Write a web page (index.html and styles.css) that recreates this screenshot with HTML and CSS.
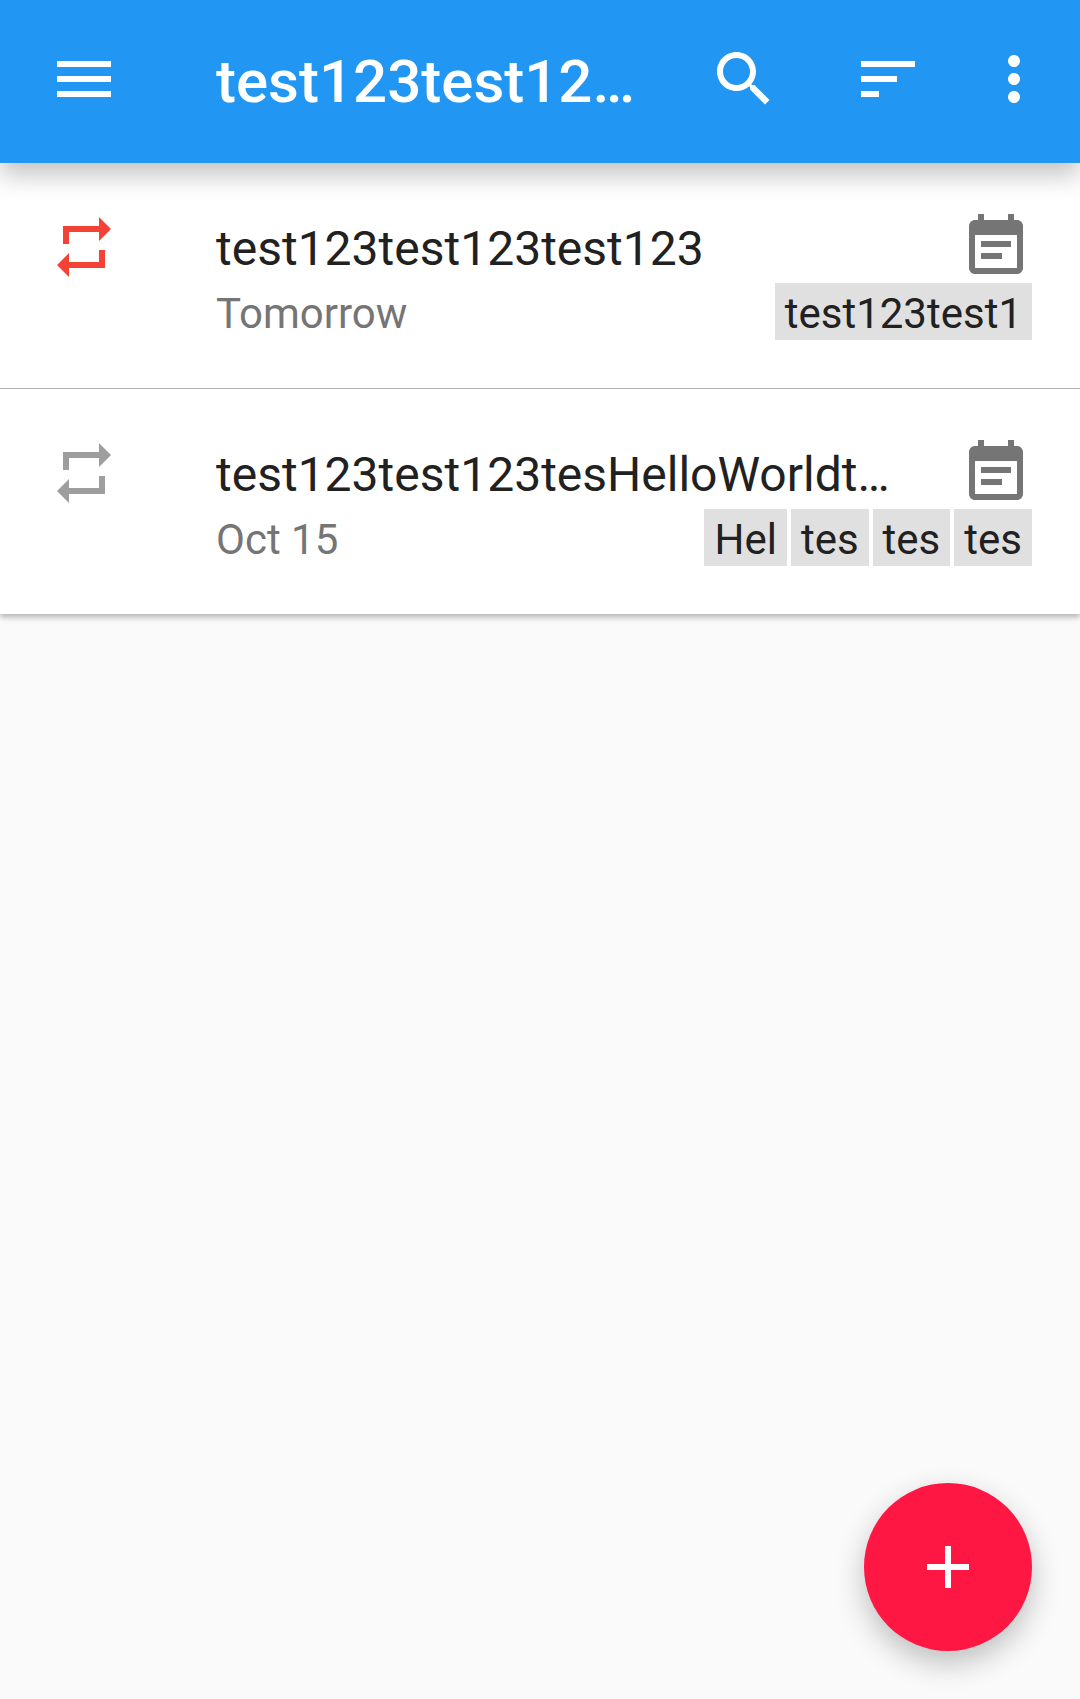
FILE: index.html
```html
<!DOCTYPE html>
<html lang="en">
<head>
  <meta charset="utf-8">
  <meta name="viewport" content="width=device-width, initial-scale=1">
  <title>Tasks</title>
  <link rel="stylesheet" href="styles.css">
</head>
<body>
  <header class="toolbar">
    <button class="icon-button menu-button" type="button" aria-label="Open menu">
      <svg class="icon" viewBox="0 0 24 24"><path d="M3 18h18v-2H3v2zm0-5h18v-2H3v2zm0-7v2h18V6H3z"/></svg>
    </button>
    <h1 class="toolbar-title">test123test12…</h1>
    <button class="icon-button" type="button" aria-label="Search">
      <svg class="icon" viewBox="0 0 24 24"><path d="M15.5 14h-.79l-.28-.27C15.41 12.59 16 11.11 16 9.5 16 5.91 13.09 3 9.5 3S3 5.91 3 9.5 5.91 16 9.5 16c1.61 0 3.09-.59 4.23-1.57l.27.28v.79l5 4.99L20.49 19l-4.99-5zm-6 0C7.01 14 5 11.99 5 9.5S7.01 5 9.5 5 14 7.01 14 9.5 11.99 14 9.5 14z"/></svg>
    </button>
    <button class="icon-button" type="button" aria-label="Sort">
      <svg class="icon" viewBox="0 0 24 24"><path d="M3 18h6v-2H3v2zM3 6v2h18V6H3zm0 7h12v-2H3v2z"/></svg>
    </button>
    <button class="icon-button more-button" type="button" aria-label="More options">
      <svg class="icon" viewBox="0 0 24 24"><path d="M12 8c1.1 0 2-.9 2-2s-.9-2-2-2-2 .9-2 2 .9 2 2 2zm0 2c-1.1 0-2 .9-2 2s.9 2 2 2 2-.9 2-2-.9-2-2-2zm0 6c-1.1 0-2 .9-2 2s.9 2 2 2 2-.9 2-2-.9-2-2-2z"/></svg>
    </button>
  </header>

  <main>
    <ul class="task-list">
      <li class="task">
        <button class="repeat repeat-high" type="button" aria-label="Complete task">
          <svg class="icon" viewBox="0 0 24 24"><path d="M7 7h10v3l4-4-4-4v3H5v6h2V7zm10 10H7v-3l-4 4 4 4v-3h12v-6h-2v4z"/></svg>
        </button>
        <div class="task-body">
          <div class="task-line">
            <h2 class="task-title">test123test123test123</h2>
            <button class="note" type="button" aria-label="Show notes">
              <svg class="icon" viewBox="0 0 24 24"><path d="M17 10H7v2h10v-2zm2-7h-1V1h-2v2H8V1H6v2H5c-1.11 0-1.99.9-1.99 2L3 19c0 1.1.89 2 2 2h14c1.1 0 2-.9 2-2V5c0-1.1-.9-2-2-2zm0 16H5V8h14v11zm-5-5H7v2h7v-2z"/></svg>
            </button>
          </div>
          <div class="task-line">
            <span class="due">Tomorrow</span>
            <span class="tags"><span class="tag">test123test1</span></span>
          </div>
        </div>
      </li>
      <li class="task">
        <button class="repeat" type="button" aria-label="Complete task">
          <svg class="icon" viewBox="0 0 24 24"><path d="M7 7h10v3l4-4-4-4v3H5v6h2V7zm10 10H7v-3l-4 4 4 4v-3h12v-6h-2v4z"/></svg>
        </button>
        <div class="task-body">
          <div class="task-line">
            <h2 class="task-title">test123test123tesHelloWorldt…</h2>
            <button class="note" type="button" aria-label="Show notes">
              <svg class="icon" viewBox="0 0 24 24"><path d="M17 10H7v2h10v-2zm2-7h-1V1h-2v2H8V1H6v2H5c-1.11 0-1.99.9-1.99 2L3 19c0 1.1.89 2 2 2h14c1.1 0 2-.9 2-2V5c0-1.1-.9-2-2-2zm0 16H5V8h14v11zm-5-5H7v2h7v-2z"/></svg>
            </button>
          </div>
          <div class="task-line">
            <span class="due">Oct 15</span>
            <span class="tags"><span class="tag">Hel</span><span class="tag">tes</span><span class="tag">tes</span><span class="tag">tes</span></span>
          </div>
        </div>
      </li>
    </ul>
  </main>

  <button class="fab" type="button" aria-label="Add task">
    <svg class="icon" viewBox="0 0 24 24"><path d="M19 13h-6v6h-2v-6H5v-2h6V5h2v6h6v2z"/></svg>
  </button>
</body>
</html>
```
FILE: styles.css
```css
* {
  box-sizing: border-box;
}

body {
  margin: 0;
  min-height: 100vh;
  background: #fafafa;
  color: #212121;
  font-family: Roboto, "Noto Sans", sans-serif;
}

button {
  flex: none;
  padding: 0;
  border: 0;
  background: none;
  color: inherit;
  cursor: pointer;
}

.icon {
  display: block;
  width: 72px;
  height: 72px;
  fill: currentColor;
}

/* Toolbar */
.toolbar {
  position: relative;
  display: flex;
  align-items: flex-start;
  padding: 0 12px 0 48px;
  background: #2196f3;
  color: #fff;
  box-shadow: 0 12px 24px rgba(0, 0, 0, 0.24);
}

.toolbar-title {
  flex: 1;
  min-width: 0;
  margin: 0;
  overflow: hidden;
  font-size: 60px;
  font-weight: 500;
  line-height: 163px;
  text-overflow: ellipsis;
  white-space: nowrap;
}

.icon-button {
  display: flex;
  align-items: center;
  justify-content: center;
  width: 144px;
  height: 158px;
}

.menu-button {
  justify-content: flex-start;
  width: 168px;
}

.more-button {
  width: 108px;
}

/* Task list */
.task-list {
  margin: 0;
  padding: 0;
  background: #fff;
  box-shadow: 0 3px 6px rgba(0, 0, 0, 0.3);
  list-style: none;
}

.task {
  display: flex;
  align-items: flex-start;
  gap: 96px;
  padding: 48px;
}

.task + .task {
  border-top: 1px solid #b0b0b0;
}

.repeat {
  color: #9e9e9e;
}

.repeat-high {
  color: #f44336;
}

.note {
  color: #757575;
}

.task-body {
  flex: 1;
  min-width: 0;
}

.task-line {
  display: flex;
  align-items: flex-end;
  justify-content: space-between;
  gap: 48px;
}

.task-title {
  flex: 1;
  min-width: 0;
  margin: 0;
  overflow: hidden;
  font-size: 48px;
  font-weight: 400;
  line-height: 68px;
  text-overflow: ellipsis;
  white-space: nowrap;
}

.due,
.tag {
  padding-top: 5px;
  font-size: 42px;
  line-height: 52px;
  white-space: nowrap;
}

.due {
  color: #757575;
}

.tags {
  display: flex;
  gap: 4px;
}

.tag {
  padding-right: 10px;
  padding-left: 10px;
  background: #e0e0e0;
}

/* Floating action button */
.fab {
  position: fixed;
  right: 48px;
  bottom: 48px;
  display: flex;
  align-items: center;
  justify-content: center;
  width: 168px;
  height: 168px;
  border-radius: 50%;
  background: #ff1744;
  color: #fff;
  box-shadow: 0 12px 30px rgba(0, 0, 0, 0.24);
}
```
